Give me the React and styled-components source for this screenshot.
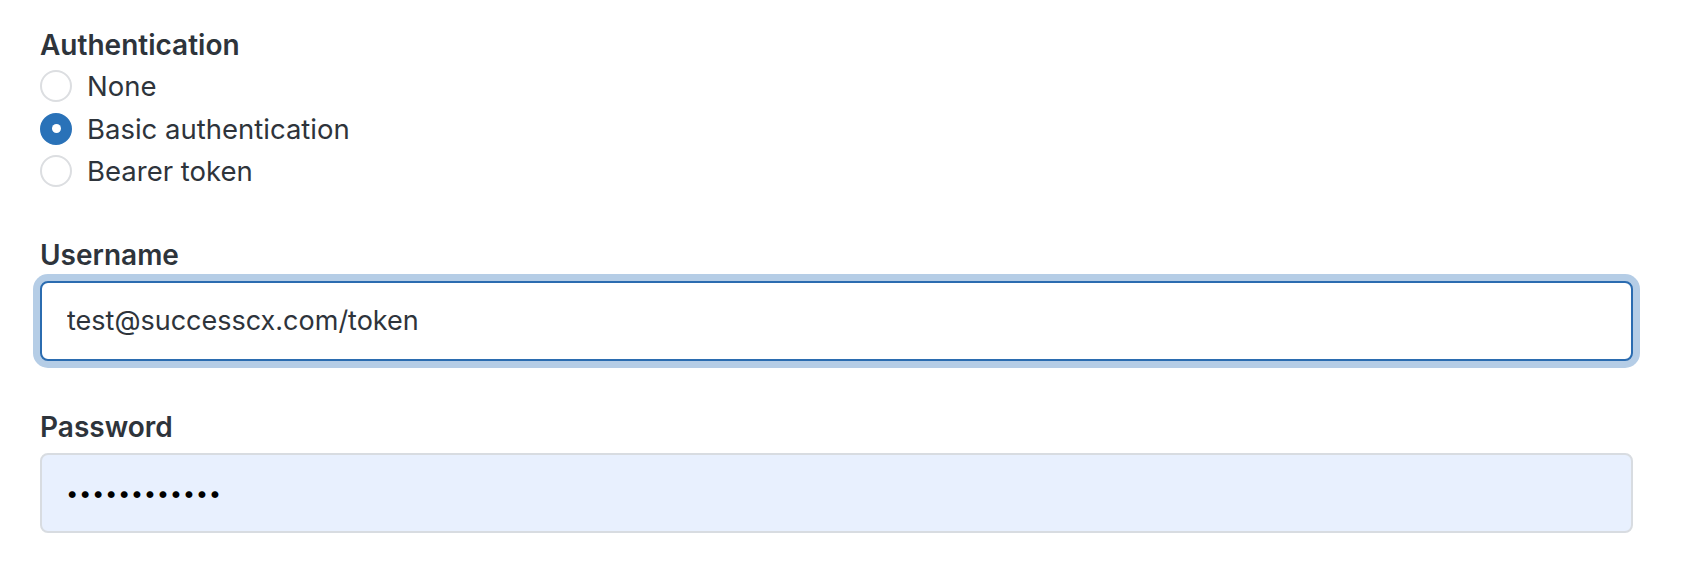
import React from "react";
import styled, { createGlobalStyle, css } from "styled-components";

const Global = createGlobalStyle`
  html, body { margin: 0; padding: 0; background: #ffffff; }
  body { font-family: Inter, "Noto Sans", sans-serif; color: #2e343b; }
  * { box-sizing: border-box; }
`;

const Form = styled.form`
  display: flex;
  flex-direction: column;
  padding: 25px 59px 0 40px;
`;

const Fieldset = styled.fieldset`
  border: 0;
  margin: 0 0 44px;
  padding: 0;
  display: flex;
  flex-direction: column;
`;

const Legend = styled.legend`
  padding: 0;
  font-size: 28px;
  font-weight: 600;
  line-height: 40px;
  color: #2e343b;
`;

const RadioList = styled.div`
  display: flex;
  flex-direction: column;
`;

const RadioRow = styled.label`
  display: flex;
  align-items: center;
  gap: 15px;
  height: 42.5px;
  font-size: 27.5px;
  line-height: 42px;
  color: #2e343b;
`;

const RadioMark = styled.span`
  width: 32px;
  height: 32px;
  border-radius: 50%;
  flex: none;
  display: flex;
  align-items: center;
  justify-content: center;
  ${(p) =>
    p.$checked
      ? css`
          background: #2a72b8;
          border: 2px solid #2a72b8;
          &::after {
            content: "";
            width: 9px;
            height: 9px;
            border-radius: 50%;
            background: #ffffff;
          }
        `
      : css`
          background: #ffffff;
          border: 2px solid #dcdee1;
        `}
`;

const Field = styled.div`
  display: flex;
  flex-direction: column;
  margin-bottom: 48px;
`;

const Label = styled.label`
  font-size: 28px;
  font-weight: 600;
  line-height: 36px;
  margin-bottom: 8px;
  color: #2e343b;
`;

const Input = styled.input`
  width: 100%;
  height: 80px;
  padding: 0 25px;
  border-radius: 8px;
  font-family: Inter, "Noto Sans", sans-serif;
  font-size: 27px;
  color: #2e343b;
  outline: none;
  ${(p) =>
    p.$focused
      ? css`
          border: 2px solid #2b6cb0;
          background: #ffffff;
          box-shadow: 0 0 0 7px #b5cde6;
        `
      : css`
          border: 2px solid #d8dce1;
          background: #e8f0fe;
        `}
  ${(p) =>
    p.type === "password" &&
    css`
      color: #000000;
      font-size: 22px;
      padding-left: 24px;
      letter-spacing: 0.6px;
    `}
`;

const options = [
  { id: "none", label: "None" },
  { id: "basic", label: "Basic authentication" },
  { id: "bearer", label: "Bearer token" },
];

export default function App() {
  const selected = "basic";
  return (
    <>
      <Global />
      <Form onSubmit={(e) => e.preventDefault()}>
        <Fieldset>
          <Legend>Authentication</Legend>
          <RadioList>
            {options.map((o) => (
              <RadioRow key={o.id}>
                <RadioMark $checked={o.id === selected} />
                {o.label}
              </RadioRow>
            ))}
          </RadioList>
        </Fieldset>
        <Field>
          <Label htmlFor="username">Username</Label>
          <Input id="username" $focused readOnly value="test@successcx.com/token" />
        </Field>
        <Field>
          <Label htmlFor="password">Password</Label>
          <Input id="password" type="password" readOnly value="............" />
        </Field>
      </Form>
    </>
  );
}
